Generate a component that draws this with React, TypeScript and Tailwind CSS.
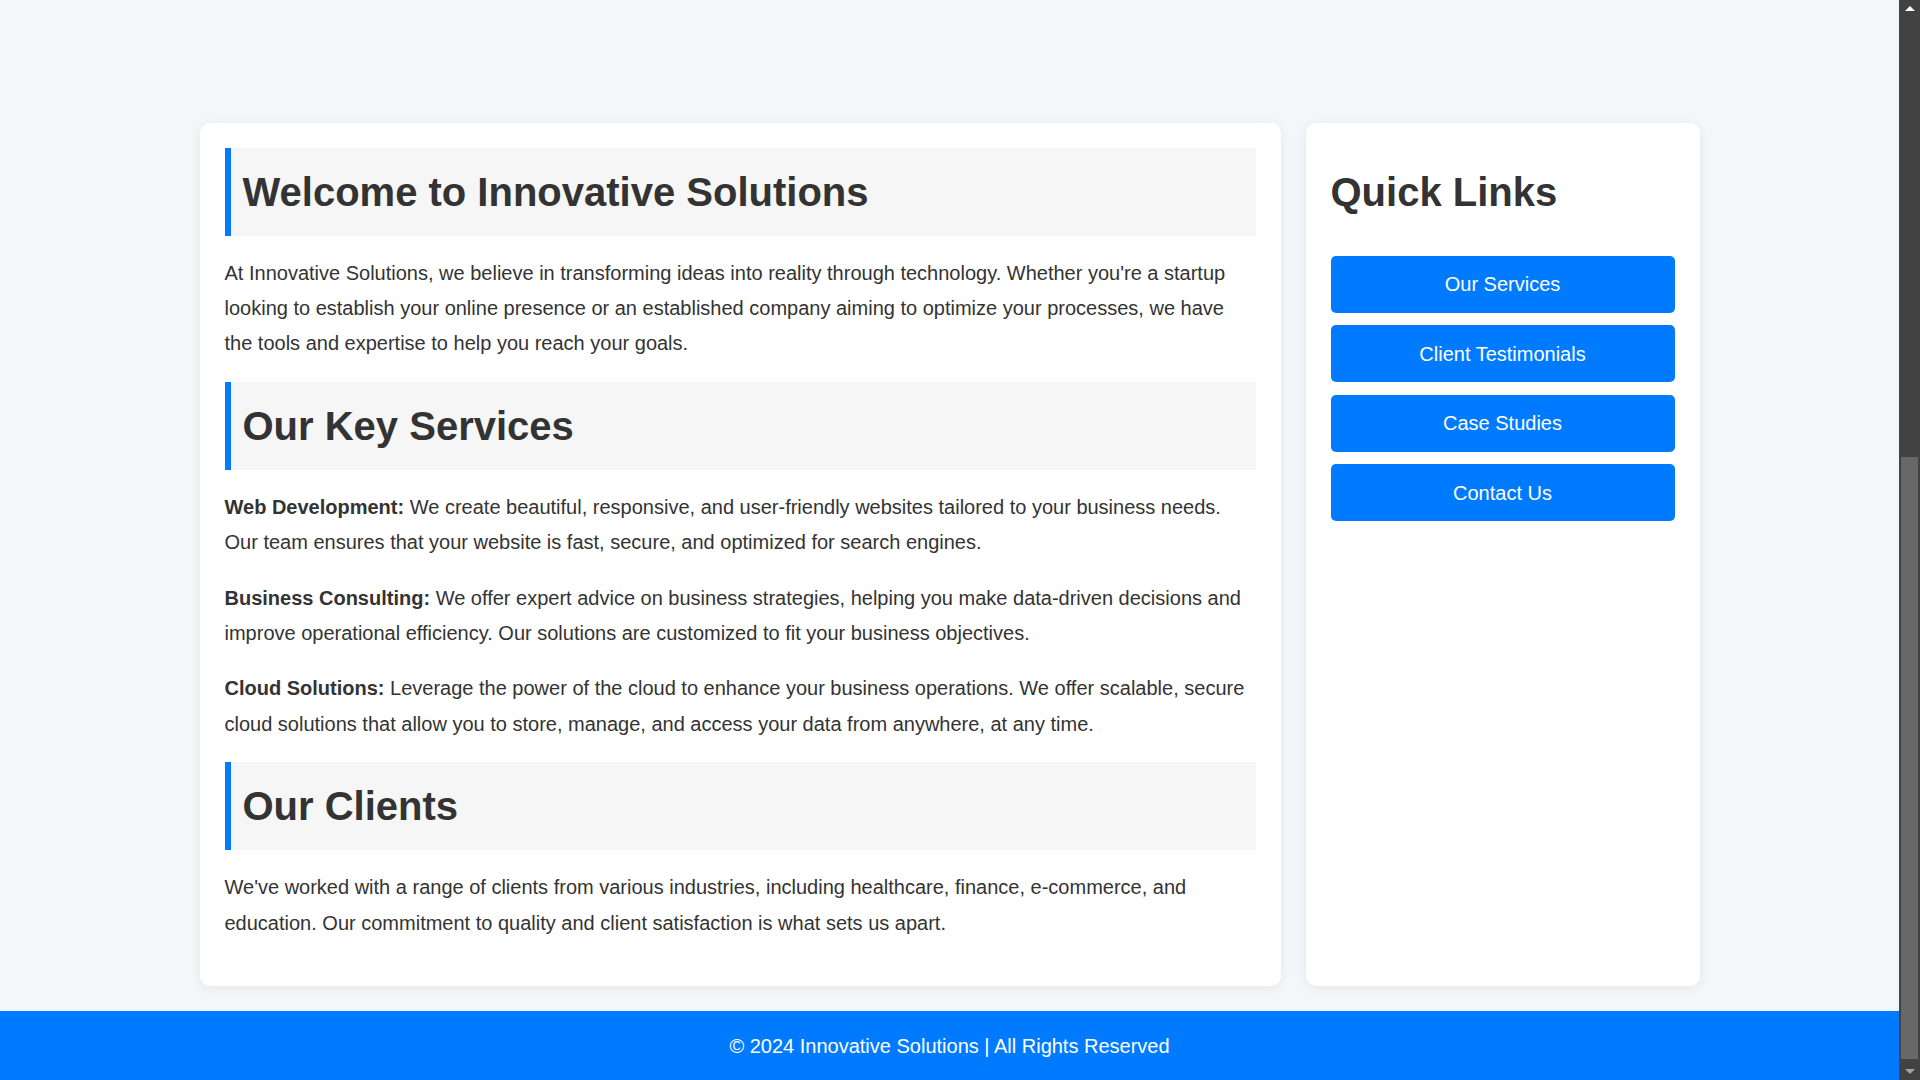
const services = [
  {
    title: "Web Development:",
    text: "We create beautiful, responsive, and user-friendly websites tailored to your business needs. Our team ensures that your website is fast, secure, and optimized for search engines.",
  },
  {
    title: "Business Consulting:",
    text: "We offer expert advice on business strategies, helping you make data-driven decisions and improve operational efficiency. Our solutions are customized to fit your business objectives.",
  },
  {
    title: "Cloud Solutions:",
    text: "Leverage the power of the cloud to enhance your business operations. We offer scalable, secure cloud solutions that allow you to store, manage, and access your data from anywhere, at any time.",
  },
];

const links = ["Our Services", "Client Testimonials", "Case Studies", "Contact Us"];

const SectionTitle = ({ children }: { children: string }) => (
  <h2 className="bg-[#f6f6f6] border-l-[6px] border-[#007bff] pl-[12px] py-5 text-[40px] leading-[48px] font-bold text-[#333] mb-5">
    {children}
  </h2>
);

// the window's scrollbar, page scrolled to the bottom
const ScrollBar = () => (
  <div className="w-[21px] h-screen bg-[#424242] flex flex-col shrink-0">
    <div className="h-[17px] flex items-center justify-center">
      <div className="w-0 h-0 border-l-[5px] border-r-[5px] border-b-[5px] border-l-transparent border-r-transparent border-b-white" />
    </div>
    <div className="flex-1 px-[2px] pt-[440px]">
      <div className="h-[602px] bg-[#686868]" />
    </div>
    <div className="h-[17px] flex items-center justify-center">
      <div className="w-0 h-0 border-l-[5px] border-r-[5px] border-t-[5px] border-l-transparent border-r-transparent border-t-[#a3a3a3]" />
    </div>
  </div>
);

const App = () => {
  return (
    <div className="h-screen flex overflow-hidden bg-[#f4f7f9] font-['Liberation_Sans',Arial,sans-serif] text-[#333]">
      <div className="flex-1 flex flex-col justify-end">
        <main className="w-[1500px] mx-auto mb-[25px] flex gap-[25px]">
          <div className="flex-1 bg-white rounded-[10px] shadow-[0_2px_12px_rgba(0,0,0,0.07)] p-[25px] text-[20px] leading-[35.4px]">
            <SectionTitle>Welcome to Innovative Solutions</SectionTitle>
            <p className="mb-5">
              At Innovative Solutions, we believe in transforming ideas into reality through technology. Whether you're a
              startup looking to establish your online presence or an established company aiming to optimize your
              processes, we have the tools and expertise to help you reach your goals.
            </p>

            <SectionTitle>Our Key Services</SectionTitle>
            {services.map((s, i) => (
              <p className="mb-5" key={i}>
                <strong className="font-bold">{s.title}</strong> {s.text}
              </p>
            ))}

            <SectionTitle>Our Clients</SectionTitle>
            <p className="mb-5">
              We've worked with a range of clients from various industries, including healthcare, finance, e-commerce, and
              education. Our commitment to quality and client satisfaction is what sets us apart.
            </p>
          </div>

          <aside className="w-[394px] bg-white rounded-[10px] shadow-[0_2px_12px_rgba(0,0,0,0.07)] p-[25px]">
            <h2 className="py-5 text-[40px] leading-[48px] font-bold text-[#333] mb-5">Quick Links</h2>
            <div className="flex flex-col gap-[12.5px]">
              {links.map((l) => (
                <a
                  key={l}
                  href="#"
                  className="h-[57px] rounded-[5px] bg-[#007bff] text-white text-[20px] flex items-center justify-center"
                >
                  {l}
                </a>
              ))}
            </div>
          </aside>
        </main>

        <footer className="h-[69px] shrink-0 bg-[#007bff] text-white text-[20px] flex items-center justify-center">
          © 2024 Innovative Solutions | All Rights Reserved
        </footer>
      </div>
      <ScrollBar />
    </div>
  );
};

export default App;
